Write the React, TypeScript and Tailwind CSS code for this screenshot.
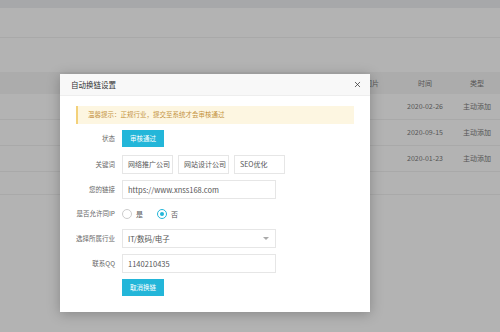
import { X } from "lucide-react";

const rows = ["2020-02-26", "2020-09-15", "2020-01-23"];

const Label = ({ text }: { text: string }) => (
  <div className="w-[46px] shrink-0 whitespace-nowrap pr-[7px] text-right text-[6.5px] text-[#666]">{text}</div>
);

const App = () => {
  return (
    <div
      className="relative h-[332px] w-[500px] overflow-hidden bg-[#b3b3b3]"
      style={{ fontFamily: '"Noto Sans CJK SC", "Noto Sans", sans-serif' }}
    >
      {/* page behind the overlay */}
      <div className="h-[8px] bg-[#a7a8aa]" />
      <div className="h-[30px] border-b border-[#a9a9a9]" />
      <div className="h-[34px]" />
      <div className="flex h-[22px] items-center bg-[#acacac] text-[7px] text-[#555]">
        <div className="flex-1" />
        <div className="w-[31px] text-left">图片</div>
        <div className="w-[58px] text-center">时间</div>
        <div className="w-[46px] text-center">类型</div>
      </div>
      {rows.map((d) => (
        <div key={d} className="flex h-[26px] items-center border-b border-[#a9a9a9] text-[7px] text-[#555]">
          <div className="flex-1" />
          <div className="w-[58px] text-center">{d}</div>
          <div className="w-[46px] text-center">主动添加</div>
        </div>
      ))}
      <div className="h-[23px] border-b border-[#a9a9a9]" />

      {/* modal */}
      <div className="absolute left-[60px] top-[74px] h-[238px] w-[310px] bg-white shadow-[0_2px_12px_rgba(0,0,0,0.25)]">
        <div className="flex h-[22px] items-center justify-between border-b border-[#eee] bg-[#f8f8f8] pl-[11px] pr-[8px]">
          <span className="text-[7.5px] text-[#333]">自动换链设置</span>
          <X size={9} strokeWidth={2} className="text-[#333]" />
        </div>
        <div className="px-[16px] pt-[10px]">
          <div className="flex h-[18px] items-center border-l-2 border-[#f3d17a] bg-[#fdf6e1] pl-[10px] text-[6.5px] text-[#c4933f]">
            温馨提示：正规行业，提交至系统才会审核通过
          </div>
          <div className="mt-[6px] flex items-center">
            <Label text="状态" />
            <button className="h-[17px] w-[42px] bg-[#23b6d9] text-[6.5px] text-white">审核通过</button>
          </div>
          <div className="mt-[8px] flex items-center">
            <Label text="关键词" />
            <div className="flex gap-[5px]">
              {["网络推广公司", "网站设计公司", "SEO优化"].map((t) => (
                <div key={t} className="flex h-[19px] w-[51px] items-center whitespace-nowrap border border-[#e6e6e6] pl-[5px] text-[7px] text-[#555]">
                  {t}
                </div>
              ))}
            </div>
          </div>
          <div className="mt-[6px] flex items-center">
            <Label text="您的链接" />
            <div className="flex h-[19px] w-[154px] items-center border border-[#e6e6e6] pl-[5px] text-[7.5px] text-[#555]">
              https://www.xnss168.com
            </div>
          </div>
          <div className="mt-[6px] flex h-[18px] items-center">
            <Label text="是否允许同IP" />
            <div className="flex items-center text-[7px] text-[#555]">
              <span className="h-[10px] w-[10px] rounded-full border border-[#ccc]" />
              <span className="ml-[4px]">是</span>
              <span className="ml-[14px] flex h-[10px] w-[10px] items-center justify-center rounded-full border border-[#23b6d9]">
                <span className="h-[4px] w-[4px] rounded-full bg-[#23b6d9]" />
              </span>
              <span className="ml-[4px]">否</span>
            </div>
          </div>
          <div className="mt-[6px] flex items-center">
            <Label text="选择所属行业" />
            <div className="flex h-[19px] w-[154px] items-center justify-between border border-[#e6e6e6] pl-[5px] pr-[6px] text-[7.5px] text-[#555]">
              <span>IT/数码/电子</span>
              <span className="h-0 w-0 border-x-[3px] border-t-[3px] border-x-transparent border-t-[#aaa]" />
            </div>
          </div>
          <div className="mt-[6px] flex items-center">
            <Label text="联系QQ" />
            <div className="flex h-[19px] w-[154px] items-center border border-[#e6e6e6] pl-[5px] text-[7.5px] text-[#555]">
              1140210435
            </div>
          </div>
          <div className="mt-[6px] flex items-center">
            <div className="w-[46px] shrink-0" />
            <button className="h-[17px] w-[42px] bg-[#23b6d9] text-[6.5px] text-white">取消换链</button>
          </div>
        </div>
      </div>
    </div>
  );
};

export default App;
